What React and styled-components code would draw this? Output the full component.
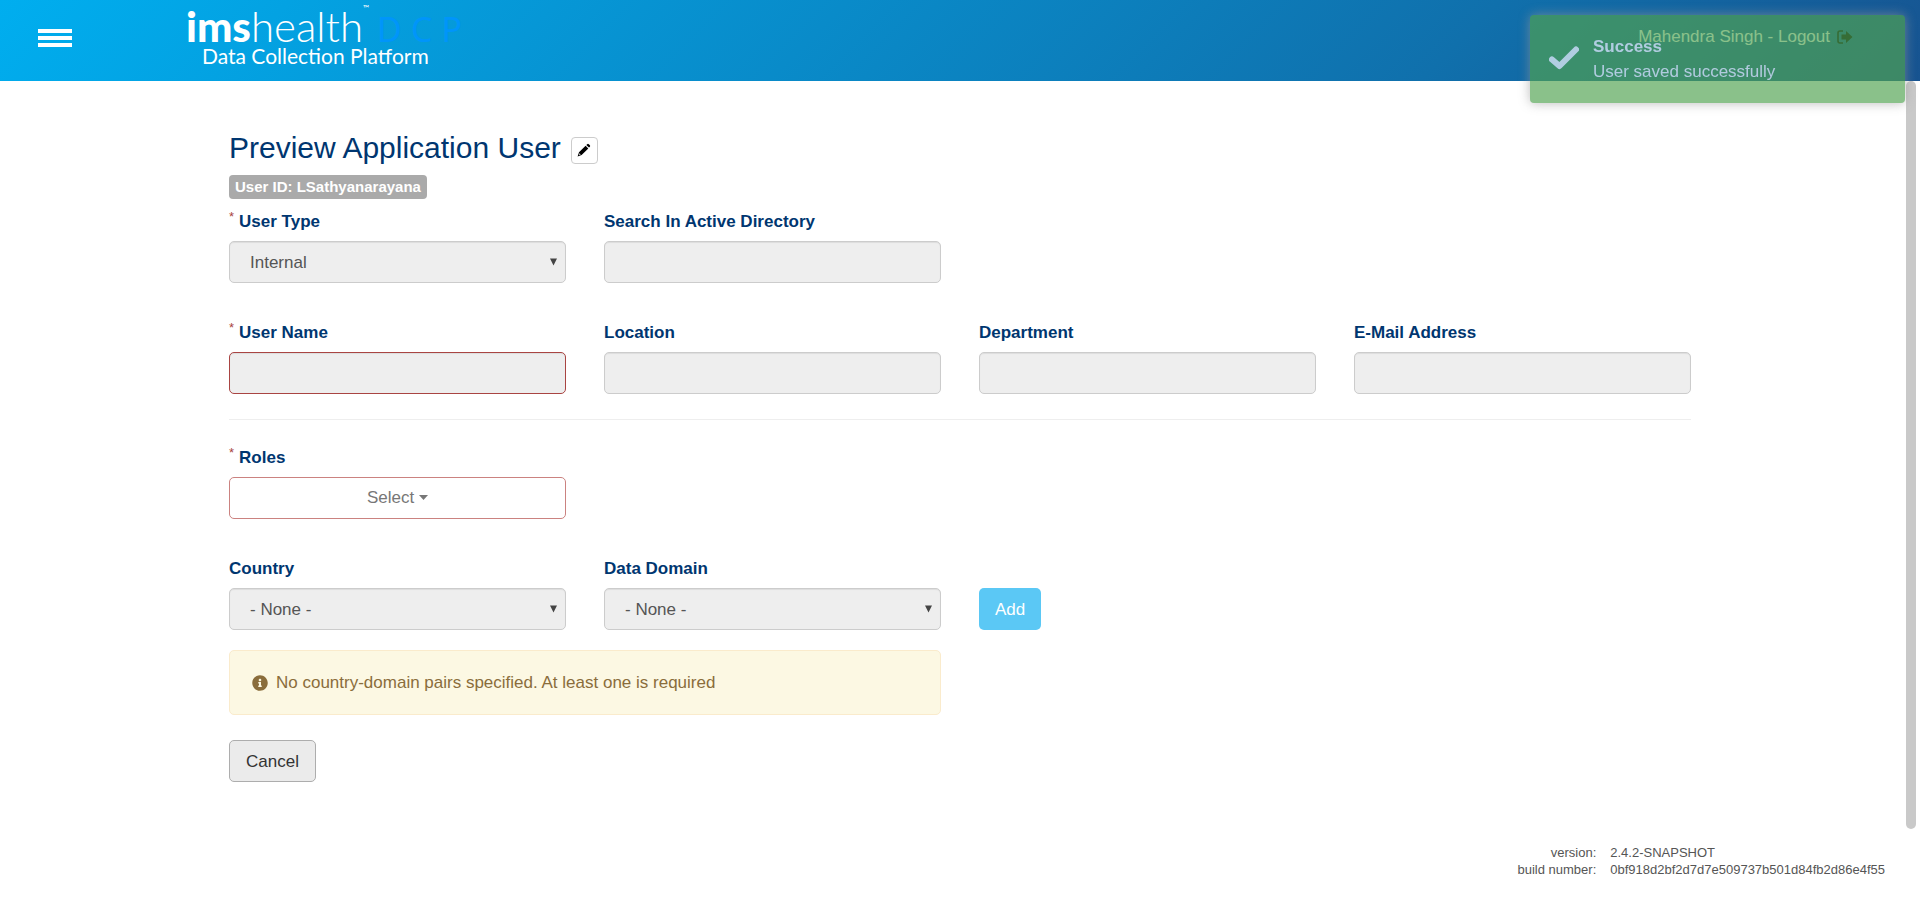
import React from "react";
import styled, { createGlobalStyle } from "styled-components";
import { FaInfoCircle } from "react-icons/fa";

const GlobalStyle = createGlobalStyle`
  *, *::before, *::after { box-sizing: border-box; }
  body {
    margin: 0;
    background: #fff;
    color: #333;
    font-family: "Liberation Sans", Arial, sans-serif;
    font-size: 17px;
    line-height: 25px;
  }
  button, input, select { font: inherit; margin: 0; }
`;

const Page = styled.div`
  display: flex;
  flex-direction: column;
  min-height: 100vh;
`;

const Header = styled.header`
  display: flex;
  align-items: flex-start;
  height: 81px;
  padding: 0 67px 0 38px;
  background: linear-gradient(135deg, #00aeef 0%, #1070ac 75%, #175390 100%);
`;

const MenuButton = styled.button`
  display: flex;
  flex-direction: column;
  gap: 3px;
  margin-top: 29px;
  padding: 0;
  border: 0;
  background: none;
`;

const MenuBar = styled.span`
  width: 34px;
  height: 4px;
  background: #fff;
`;

const Brand = styled.a`
  display: flex;
  flex-direction: column;
  margin-left: 114px;
  color: #fff;
  font-family: Lato, sans-serif;
  text-decoration: none;
`;

const BrandRow = styled.span`
  display: flex;
  height: 44px;
  line-height: 52px;
  font-size: 42px;
  font-weight: 300;
`;

const BrandStrong = styled.span`
  font-weight: 900;
`;

const Trademark = styled.span`
  font-size: 8px;
  line-height: 16px;
  font-weight: 400;
`;

const BrandShort = styled.span`
  display: flex;
  gap: 9px;
  margin-left: 8px;
  color: #0095fa;
  font-family: "Noto Sans", sans-serif;
  font-size: 34px;
  line-height: 58px;
  font-weight: 400;
`;

const BrandTagline = styled.span`
  padding-left: 16px;
  font-size: 21px;
  line-height: 24px;
`;

const UserLink = styled.a`
  display: flex;
  align-items: center;
  gap: 7px;
  margin: 24px 0 0 auto;
  color: #fff;
  text-decoration: none;
`;

const Body = styled.div`
  display: flex;
  flex: 1;
`;

const Content = styled.div`
  display: flex;
  flex: 1;
  flex-direction: column;
  padding-left: 14px;
`;

const ScrollTrack = styled.div`
  width: 14px;
`;

const ScrollThumb = styled.div`
  width: 10px;
  height: 748px;
  border-radius: 5px;
  background: #c9c9c9;
`;

const Main = styled.main`
  width: 100%;
  max-width: 1502px;
  margin: 0 auto;
  padding: 50px 20px 0;
`;

const TitleRow = styled.div`
  display: flex;
  align-items: center;
  gap: 10px;
`;

const Title = styled.h1`
  margin: 0;
  color: #003670;
  font-size: 30px;
  line-height: 34px;
  font-weight: 400;
`;

const EditButton = styled.button`
  display: flex;
  align-items: center;
  justify-content: center;
  width: 27px;
  height: 27px;
  margin-top: 4px;
  padding: 0;
  border: 1px solid #ccc;
  border-radius: 4px;
  background: #fff;
  color: #000;
`;

const Badge = styled.span`
  display: block;
  width: fit-content;
  margin: 10px 0;
  padding: 0 6px 1px;
  border-radius: 4px;
  background: #aaa;
  color: #fff;
  font-size: 15px;
  line-height: 23px;
  font-weight: 700;
`;

const Row = styled.div`
  display: grid;
  grid-template-columns: repeat(4, 1fr);
  column-gap: 38px;
  align-items: end;
  margin-bottom: ${(p) => p.$after ?? 37}px;
`;

const FieldBox = styled.div`
  display: flex;
  flex-direction: column;
  gap: 7px;
`;

const Label = styled.label`
  display: flex;
  gap: 5px;
  color: #003670;
  font-weight: 700;
`;

const Required = styled.span`
  color: #a94442;
  font-size: 13px;
  line-height: 16px;
  font-weight: 400;
`;

const TextInput = styled.input`
  width: 100%;
  height: 42px;
  padding: 0 20px;
  border: 1px solid ${(p) => (p.$invalid ? "#a94442" : "#ccc")};
  border-radius: 5px;
  background: #eee;
  box-shadow: inset 0 1px 1px rgba(0, 0, 0, 0.075);
  color: #555;
`;

const SelectBox = styled.div`
  display: grid;
  align-items: center;

  & > * { grid-area: 1 / 1; }

  svg {
    justify-self: end;
    margin-right: 9px;
    pointer-events: none;
  }
`;

const SelectInput = styled.select`
  width: 100%;
  height: 42px;
  padding: 0 20px;
  border: 1px solid #ccc;
  border-radius: 5px;
  appearance: none;
  background: #eee;
  box-shadow: inset 0 1px 1px rgba(0, 0, 0, 0.075);
  color: #555;
  opacity: 1;
`;

const Rule = styled.hr`
  height: 1px;
  margin: 0 0 25px;
  border: 0;
  background: #eee;
`;

const RolesButton = styled.button`
  display: flex;
  align-items: center;
  justify-content: center;
  gap: 5px;
  height: 42px;
  padding: 0 6px 2px;
  border: 1px solid #cb8280;
  border-radius: 5px;
  background: #fff;
  color: #777;
`;

const AddButton = styled.button`
  justify-self: start;
  height: 42px;
  padding: 0 16px;
  border: 0;
  border-radius: 5px;
  background: #5bc8f5;
  color: #fff;
`;

const Alert = styled.div`
  grid-column: span 2;
  display: flex;
  align-items: center;
  gap: 8px;
  padding: 19px 22px;
  border: 1px solid #faebcc;
  border-radius: 5px;
  background: #fcf8e3;
  color: #8a6d3b;
`;

const CancelButton = styled.button`
  height: 42px;
  padding: 0 16px;
  border: 1px solid #adadad;
  border-radius: 5px;
  background: #ebebeb;
  color: #333;
`;

const Footer = styled.footer`
  margin-top: auto;
  padding: 0 21px 24px;
`;

const BuildInfo = styled.dl`
  display: grid;
  grid-template-columns: auto auto;
  justify-content: end;
  column-gap: 14px;
  margin: 0;
  color: #555;
  font-size: 13px;
  line-height: 17px;

  dt { text-align: right; }
  dd { margin: 0; }
`;

const Toast = styled.div`
  position: fixed;
  top: 15px;
  right: 15px;
  display: flex;
  gap: 14px;
  width: 375px;
  height: 88px;
  padding: 19px;
  border-radius: 4px;
  background: #51a351;
  box-shadow: 0 0 12px #999;
  color: #fff;
  opacity: 0.67;

  svg { margin-top: 12px; }
`;

const ToastTitle = styled.strong`
  display: block;
`;

const Caret = () => (
  <svg width="7" height="8" viewBox="0 0 7 8" aria-hidden="true">
    <path d="M0 0.5H7L3.5 7.5Z" fill="#444" />
  </svg>
);

const Field = ({ id, label, required, children }) => (
  <FieldBox>
    <Label htmlFor={id}>
      {required && <Required>*</Required>}
      {label}
    </Label>
    {children}
  </FieldBox>
);

const TextField = ({ id, label, required }) => (
  <Field id={id} label={label} required={required}>
    <TextInput id={id} type="text" disabled $invalid={required} />
  </Field>
);

const SelectField = ({ id, label, required, value }) => (
  <Field id={id} label={label} required={required}>
    <SelectBox>
      <SelectInput id={id} disabled defaultValue={value}>
        <option>{value}</option>
      </SelectInput>
      <Caret />
    </SelectBox>
  </Field>
);

export default function App() {
  return (
    <Page>
      <GlobalStyle />
      <Header>
        <MenuButton type="button" aria-label="Menu">
          <MenuBar />
          <MenuBar />
          <MenuBar />
        </MenuButton>
        <Brand href="#">
          <BrandRow>
            <BrandStrong>ims</BrandStrong>
            <span>health</span>
            <Trademark>™</Trademark>
            <BrandShort>
              <span>D</span>
              <span>C</span>
              <span>P</span>
            </BrandShort>
          </BrandRow>
          <BrandTagline>Data Collection Platform</BrandTagline>
        </Brand>
        <UserLink href="#">
          Mahendra Singh - Logout
          <svg width="16" height="14" viewBox="0 0 16 14" aria-hidden="true">
            <path d="M6 1H3Q1 1 1 3V11Q1 13 3 13H6" fill="none" stroke="#000" strokeWidth="1.6" />
            <path d="M9 1L15.5 7L9 13V9.5H4.500V4.500H9Z" fill="#000" />
          </svg>
        </UserLink>
      </Header>

      <Body>
        <Content>
          <Main>
            <TitleRow>
              <Title>Preview Application User</Title>
              <EditButton type="button" aria-label="Edit user">
                <svg width="14" height="14" viewBox="0 0 14 14" fill="currentColor" aria-hidden="true">
                  <path d="M10.200 1.200Q11 .5 11.800 1.200L12.900 2.300Q13.500 3 12.900 3.700L12 4.600L9.300 2Z" />
                  <path fillRule="evenodd" d="M8.600 2.700L11.300 5.400L4.600 12L.6 13.400L2 9.300ZM2.600 10.300L2 12L3.700 11.400Z" />
                </svg>
              </EditButton>
            </TitleRow>
            <Badge>User ID: LSathyanarayana</Badge>

            <Row>
              <SelectField id="user-type" label="User Type" required value="Internal" />
              <TextField id="directory-search" label="Search In Active Directory" />
            </Row>
            <Row $after={25}>
              <TextField id="user-name" label="User Name" required />
              <TextField id="location" label="Location" />
              <TextField id="department" label="Department" />
              <TextField id="email" label="E-Mail Address" />
            </Row>
            <Rule />
            <Row>
              <Field id="roles" label="Roles" required>
                <RolesButton id="roles" type="button">
                  Select
                  <svg width="9" height="5" viewBox="0 0 9 5" aria-hidden="true">
                    <path d="M0 0H9L4.500 5Z" fill="currentColor" />
                  </svg>
                </RolesButton>
              </Field>
            </Row>
            <Row $after={20}>
              <SelectField id="country" label="Country" value="- None -" />
              <SelectField id="data-domain" label="Data Domain" value="- None -" />
              <AddButton type="button">Add</AddButton>
            </Row>
            <Row $after={25}>
              <Alert role="alert">
                <FaInfoCircle size={16} />
                No country-domain pairs specified. At least one is required
              </Alert>
            </Row>
            <CancelButton type="button">Cancel</CancelButton>
          </Main>
          <Footer>
            <BuildInfo>
              <dt>version:</dt>
              <dd>2.4.2-SNAPSHOT</dd>
              <dt>build number:</dt>
              <dd>0bf918d2bf2d7d7e509737b501d84fb2d86e4f55</dd>
            </BuildInfo>
          </Footer>
        </Content>
        <ScrollTrack>
          <ScrollThumb />
        </ScrollTrack>
      </Body>

      <Toast role="status">
        <svg width="30" height="24" viewBox="0 0 30 24" aria-hidden="true">
          <path d="M3 13.500L10.500 20L27 3.500" fill="none" stroke="#fff" strokeWidth="6" strokeLinecap="round" strokeLinejoin="round" />
        </svg>
        <div>
          <ToastTitle>Success</ToastTitle>
          User saved successfully
        </div>
      </Toast>
    </Page>
  );
}
